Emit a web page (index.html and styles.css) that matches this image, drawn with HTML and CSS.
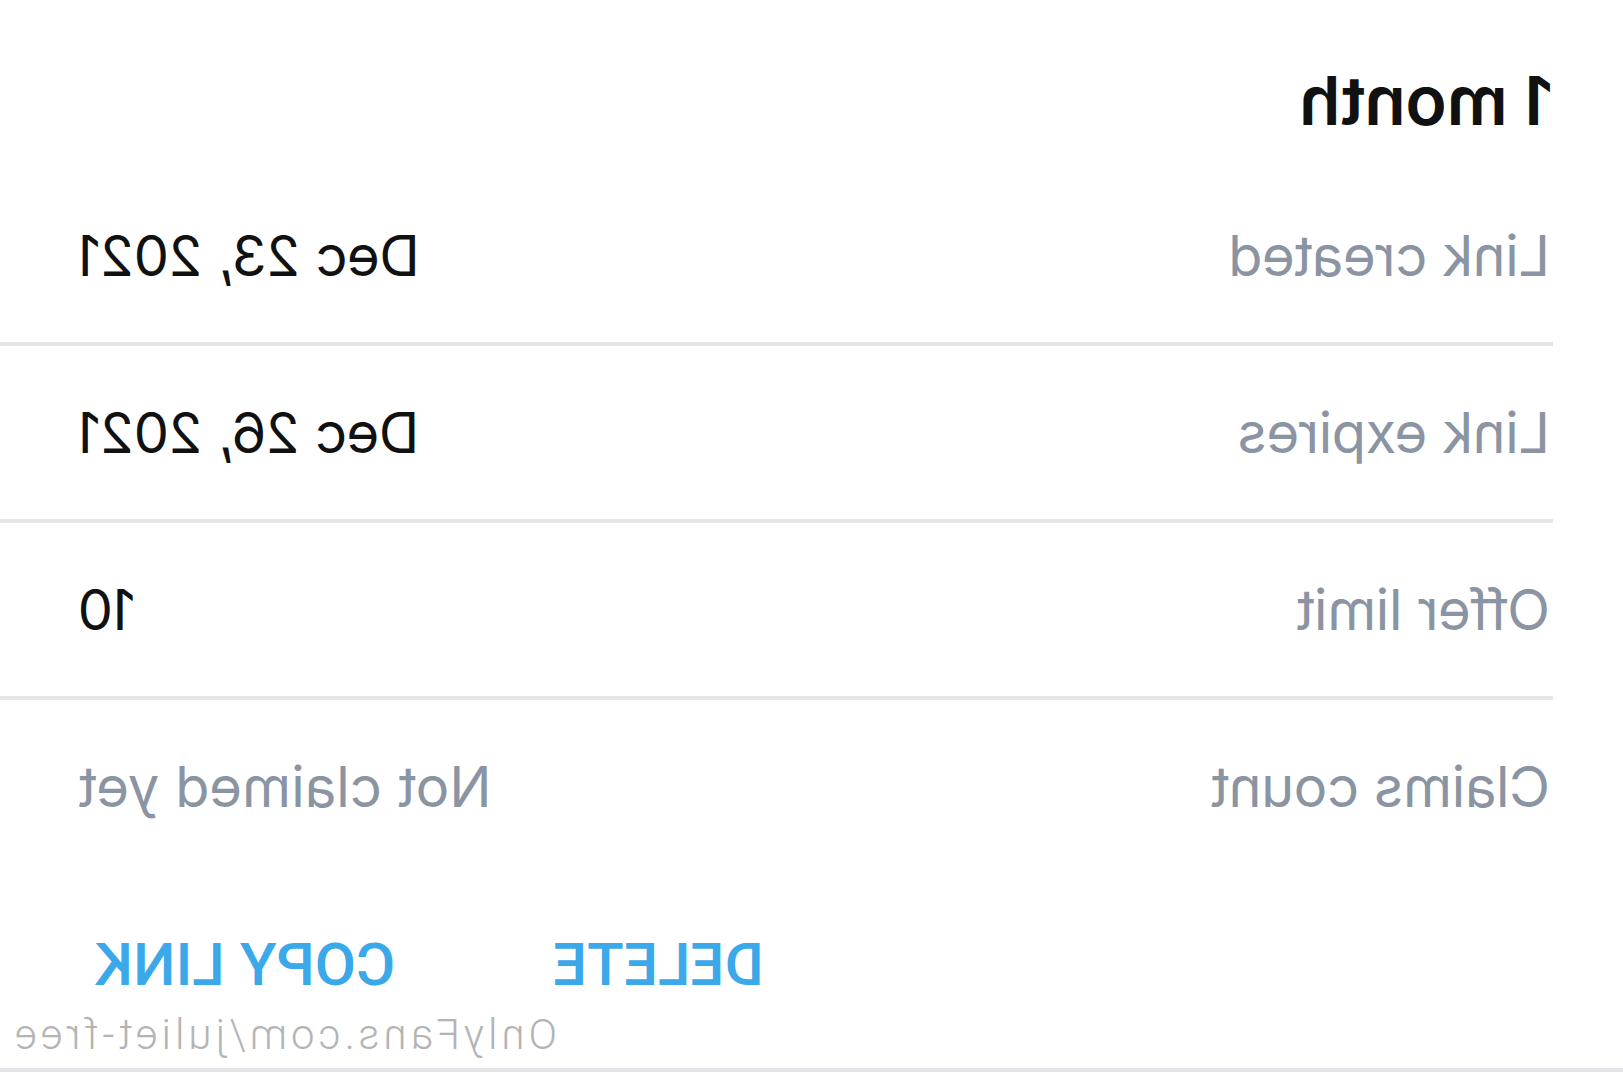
FILE: index.html
```html
<!DOCTYPE html>
<html lang="en">
<head>
<meta charset="utf-8">
<title>Trial link</title>
<link rel="stylesheet" href="styles.css">
</head>
<body>
<div class="page">
  <div class="header">
    <div class="title">1 month</div>
  </div>
  <div class="details">
    <div class="row">
      <span class="label">Link created</span>
      <span class="value">Dec 23, 2021</span>
    </div>
    <div class="row">
      <span class="label">Link expires</span>
      <span class="value">Dec 26, 2021</span>
    </div>
    <div class="row">
      <span class="label">Offer limit</span>
      <span class="value">10</span>
    </div>
    <div class="row row-last">
      <span class="label">Claims count</span>
      <span class="value value-muted">Not claimed yet</span>
    </div>
  </div>
  <div class="actions">
    <button class="action">DELETE</button>
    <button class="action">COPY LINK</button>
  </div>
  <div class="watermark">OnlyFans.com/juliet-free</div>
</div>
</body>
</html>
```

FILE: styles.css
```css
html, body {
  margin: 0;
  padding: 0;
  background: #ffffff;
}

body {
  width: 1623px;
  height: 1079px;
  overflow: hidden;
  font-family: "Inter", "Liberation Sans", sans-serif;
}

.page {
  position: relative;
  width: 1623px;
  height: 1068px;
  border-bottom: 4px solid #e4e4e9;
  transform: scaleX(-1);
  box-sizing: content-box;
}

.header {
  height: 169px;
  box-sizing: border-box;
  padding: 60px 0 0 70px;
}

.title {
  font-size: 68px;
  line-height: 80px;
  font-weight: 600;
  color: #111111;
  letter-spacing: -0.3px;
}

.details {
  margin-left: 70px;
}

.row {
  display: flex;
  justify-content: space-between;
  align-items: center;
  height: 173px;
  padding-right: 78px;
  border-bottom: 4px solid #e6e6ea;
}

.row-last {
  border-bottom: none;
}

.label {
  font-size: 56px;
  color: #8a94a3;
  letter-spacing: -0.4px;
  padding-left: 3px;
}

.value {
  font-size: 56px;
  color: #111111;
  letter-spacing: -0.4px;
}

.value-muted {
  color: #8a94a3;
  letter-spacing: 0;
}

.actions {
  display: flex;
  justify-content: flex-end;
  align-items: center;
  gap: 158px;
  height: 100px;
  margin-top: 41px;
  padding-right: 95px;
}

.action {
  border: none;
  background: none;
  padding: 0;
  font-family: "Roboto", "Liberation Sans", sans-serif;
  font-size: 60px;
  font-weight: 500;
  color: #3ba9e9;
  letter-spacing: 0;
}

.watermark {
  position: absolute;
  left: 1066px;
  top: 1010px;
  font-family: "Roboto", "Liberation Sans", sans-serif;
  font-weight: 300;
  font-size: 42px;
  line-height: 50px;
  letter-spacing: 4px;
  color: #b4b4b4;
  white-space: nowrap;
}
```
